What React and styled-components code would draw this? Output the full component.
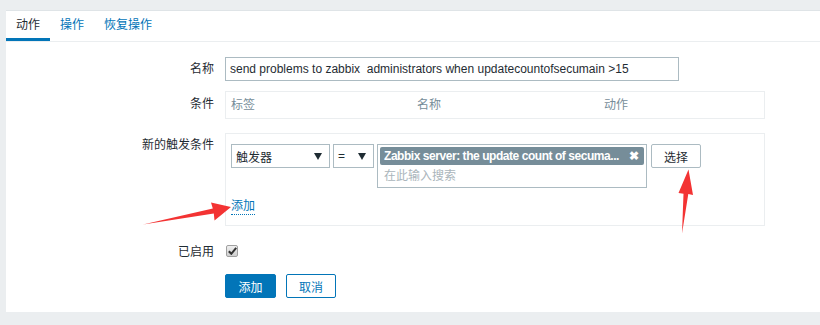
import React from 'react';
import styled, { createGlobalStyle } from 'styled-components';

const GlobalStyle = createGlobalStyle`
  html, body {
    margin: 0;
    padding: 0;
    background: #ebeef0;
  }
  body {
    font-family: Arial, "Liberation Sans", "Noto Sans CJK SC", sans-serif;
    font-size: 12px;
    color: #1f2c33;
  }
`;

const Page = styled.div`
  position: relative;
  height: 325px;
  padding: 10px 0 0 6px;
  box-sizing: border-box;
  overflow: hidden;
`;

const Panel = styled.div`
  background: #ffffff;
  border-top: 1px solid #dfe4e7;
  height: 302px;
  box-sizing: border-box;
`;

const TabBar = styled.div`
  display: flex;
  height: 30px;
  border-bottom: 1px solid #ebeef0;
`;

const Tab = styled.div`
  padding: 0 10px;
  line-height: 29px;
  font-size: 12px;
  color: ${p => (p.active ? '#1f2c33' : '#0275b8')};
  box-shadow: ${p => (p.active ? 'inset 0 -3px 0 #0275b8' : 'none')};
  cursor: pointer;
`;

const Form = styled.div`
  padding-top: 15px;
`;

const FormRow = styled.div`
  display: flex;
  align-items: flex-start;
  margin-bottom: ${p => p.gap || 10}px;
`;

const Label = styled.div`
  width: 219px;
  padding-right: 11px;
  box-sizing: border-box;
  text-align: right;
  line-height: 24px;
  padding-top: ${p => p.offset || 0}px;
  white-space: nowrap;
`;

const TextInput = styled.div`
  width: 454px;
  height: 24px;
  box-sizing: border-box;
  border: 1px solid #acbbc2;
  padding: 0 4px;
  line-height: 22px;
  white-space: pre;
  overflow: hidden;
`;

const Table = styled.div`
  width: 540px;
  height: 28px;
  box-sizing: border-box;
  border: 1px solid #ebeef0;
  display: grid;
  grid-template-columns: 186px 187px 1fr;
`;

const HeadCell = styled.div`
  padding-left: 5px;
  line-height: 26px;
  color: #768d99;
`;

const Box = styled.div`
  width: 540px;
  box-sizing: border-box;
  border: 1px solid #ebeef0;
  padding: 10px 5px;
`;

const FilterRow = styled.div`
  display: flex;
  align-items: flex-start;
`;

const Select = styled.div`
  width: ${p => p.width}px;
  height: 24px;
  box-sizing: border-box;
  border: 1px solid #acbbc2;
  margin-right: ${p => p.gap || 0}px;
  padding: 0 7px 0 4px;
  display: flex;
  align-items: center;
  justify-content: space-between;
`;

const Caret = styled.span`
  width: 0;
  height: 0;
  border-left: 4px solid transparent;
  border-right: 4px solid transparent;
  border-top: 7px solid #1f2c33;
`;

const MultiSelect = styled.div`
  width: 270px;
  height: 44px;
  box-sizing: border-box;
  border: 1px solid #acbbc2;
  padding: 2px;
  margin-right: 4px;
`;

const Chip = styled.div`
  height: 18px;
  width: 264px;
  box-sizing: border-box;
  background: #768d99;
  border-radius: 2px;
  color: #ffffff;
  font-weight: bold;
  display: flex;
  align-items: center;
  justify-content: space-between;
  padding: 0 5px 0 4px;
  white-space: nowrap;
  overflow: hidden;
`;

const ChipText = styled.span`
  letter-spacing: -0.45px;
`;

const ChipClose = styled.span`
  font-size: 12px;
  line-height: 1;
`;

const Placeholder = styled.div`
  padding-left: 4px;
  line-height: 22px;
  color: #aab5bb;
`;

const Button = styled.button`
  width: ${p => p.width || 50}px;
  height: 24px;
  box-sizing: border-box;
  border-radius: 2px;
  font-family: inherit;
  font-size: 12px;
  padding: 0;
  cursor: pointer;
  margin-left: ${p => p.gap || 0}px;
  background: ${p => (p.variant === 'primary' ? '#0275b8' : '#ffffff')};
  color: ${p => (p.variant === 'primary' ? '#ffffff' : p.variant === 'outline' ? '#0275b8' : '#1f2c33')};
  border: 1px solid ${p => (p.variant === 'plain' ? '#acbbc2' : '#0275b8')};
`;

const LinkText = styled.span`
  display: inline-block;
  margin-top: 10px;
  line-height: 16px;
  color: #0275b8;
  border-bottom: 1px dotted #0275b8;
`;

const CheckBox = styled.div`
  width: 12px;
  height: 12px;
  margin-top: 5px;
  margin-left: 1px;
  box-sizing: border-box;
  border: 1px solid #a0a0a0;
  border-radius: 2px;
  background: linear-gradient(#f0f0f0, #cfcfcf);
  display: flex;
  align-items: center;
  justify-content: center;
`;

const Actions = styled.div`
  display: flex;
  padding-left: 219px;
`;

const Overlay = styled.svg`
  position: absolute;
  top: 0;
  left: 0;
  pointer-events: none;
`;

export default function App() {
  return (
    <>
      <GlobalStyle />
      <Page>
        <Panel>
          <TabBar>
            <Tab active>动作</Tab>
            <Tab>操作</Tab>
            <Tab>恢复操作</Tab>
          </TabBar>
          <Form>
            <FormRow gap={10}>
              <Label>名称</Label>
              <TextInput>send problems to zabbix  administrators when updatecountofsecumain &gt;15</TextInput>
            </FormRow>
            <FormRow gap={14}>
              <Label offset={1}>条件</Label>
              <Table>
                <HeadCell>标签</HeadCell>
                <HeadCell>名称</HeadCell>
                <HeadCell>动作</HeadCell>
              </Table>
            </FormRow>
            <FormRow gap={14}>
              <Label>新的触发条件</Label>
              <Box>
                <FilterRow>
                  <Select width={99} gap={3}>
                    <span>触发器</span>
                    <Caret />
                  </Select>
                  <Select width={41} gap={3}>
                    <span>=</span>
                    <Caret />
                  </Select>
                  <MultiSelect>
                    <Chip>
                      <ChipText>Zabbix server: the update count of secuma...</ChipText>
                      <ChipClose>✖</ChipClose>
                    </Chip>
                    <Placeholder>在此输入搜索</Placeholder>
                  </MultiSelect>
                  <Button variant="plain" width={50}>选择</Button>
                </FilterRow>
                <LinkText>添加</LinkText>
              </Box>
            </FormRow>
            <FormRow gap={10}>
              <Label>已启用</Label>
              <CheckBox>
                <svg width="9" height="8" viewBox="0 0 9 8">
                  <path d="M0.8 4.2 L3.3 6.8 L8.2 0.8" fill="none" stroke="#333" strokeWidth="2" />
                </svg>
              </CheckBox>
            </FormRow>
            <Actions>
              <Button variant="primary" width={51}>添加</Button>
              <Button variant="outline" width={50} gap={10}>取消</Button>
            </Actions>
          </Form>
        </Panel>
        <Overlay width="820" height="325" viewBox="0 0 820 325">
          <polygon
            points="143,224.5 213.8,213.4 214.5,220.5 231,207 211,202.5 212.8,208.4"
            fill="#f33333"
          />
          <polygon
            points="682,233.5 688.3,194 693,195 688.5,169.5 678.5,193 683.5,193.7"
            fill="#f33333"
          />
        </Overlay>
      </Page>
    </>
  );
}
